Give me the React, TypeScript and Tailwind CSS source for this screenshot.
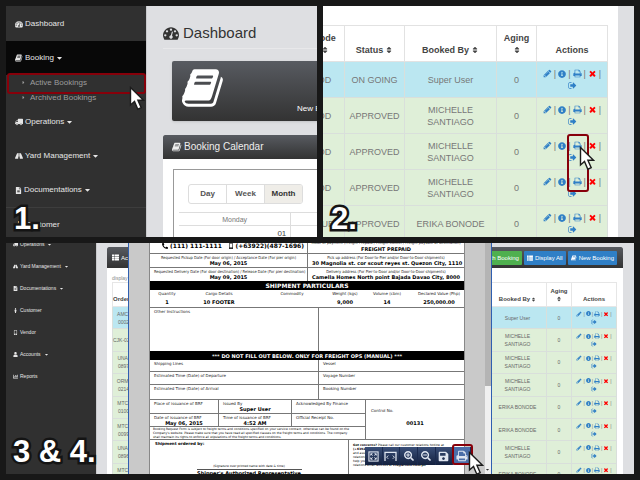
import React from "react";
import {
  FaCaretDown,
  FaCaretRight,
  FaChartBar,
  FaFileAlt,
  FaInfoCircle,
  FaMale,
  FaMobileAlt,
  FaPhoneAlt,
  FaRoad,
  FaSave,
  FaSearchMinus,
  FaSearchPlus,
  FaSort,
  FaThList,
  FaTruck,
  FaUser,
} from "react-icons/fa";

const SANS = "font-['Liberation_Sans',Arial,sans-serif]";
const FORM = "font-['DejaVu_Sans',Verdana,sans-serif]";
const FORM_NARROW = "font-['DejaVu_Sans_Condensed','DejaVu_Sans',sans-serif]";

type GlyphProps = { className?: string };

function Glyph({ d, className = "" }: GlyphProps & { d: string }) {
  return (
    <svg viewBox="0 0 1792 1792" fill="currentColor" aria-hidden="true" className={`shrink-0 ${className}`}>
      <path d={d} />
    </svg>
  );
}

const Book = (p: GlyphProps) => (
  <Glyph
    {...p}
    d="M1639 478q40 57 18 129l-275 906q-19 64-76.5 107.5t-122.5 43.5h-923q-77 0-148.5-53.5t-99.5-131.5q-24-67-2-127 0-4 3-27t4-37q1-8-3-21.5t-3-19.5q2-11 8-21t16.5-23.5 16.5-23.5q23-38 45-91.5t30-91.5q3-10 .5-30t-.5-28q3-11 17-28t17-23q21-36 42-92t25-90q1-9-2.5-32t.5-28q4-13 22-30.5t22-22.5q19-26 42.5-84.5t27.5-96.5q1-8-3-25.5t-2-26.5q2-8 9-18t18-23 17-21q8-12 16.5-30.5t15-35 16-36 19.5-32 26.5-23.5 36-11.5 47.5 5.500l-1 3q38-9 51-9h761q74 0 114 56t18 130l-274 906q-36 119-71.5 153.5t-128.5 34.5h-869q-27 0-38 15-11 16-1 43 24 70 144 70h923q29 0 56-15.5t35-41.5l300-987q7-22 5-57 38 15 59 43zm-1064 2q-4 13 2 22.5t20 9.5h608q13 0 25.5-9.5t16.5-22.500l21-64q4-13-2-22.5t-20-9.5h-608q-13 0-25.5 9.5t-16.5 22.5zm-83 256q-4 13 2 22.5t20 9.5h608q13 0 25.5-9.5t16.5-22.500l21-64q4-13-2-22.5t-20-9.5h-608q-13 0-25.5 9.5t-16.5 22.5z"
  />
);

const Gauge = (p: GlyphProps) => (
  <Glyph
    {...p}
    d="M384 1152q0-53-37.5-90.5t-90.5-37.5-90.5 37.5-37.5 90.5 37.5 90.5 90.5 37.5 90.5-37.5 37.5-90.5zm192-448q0-53-37.5-90.5t-90.5-37.5-90.5 37.5-37.5 90.5 37.5 90.5 90.5 37.5 90.5-37.5 37.5-90.5zm428 481l101-382q6-26-7.5-48.5t-38.5-29.5-48 6.5-30 39.5l-101 382q-60 5-107 43.5t-63 98.5q-20 77 20 146t117 89 146-20 89-117q16-60-6-117t-72-91zm660-33q0-53-37.5-90.5t-90.5-37.5-90.5 37.5-37.5 90.5 37.5 90.5 90.5 37.5 90.5-37.5 37.5-90.5zm-640-640q0-53-37.5-90.5t-90.5-37.5-90.5 37.5-37.5 90.5 37.5 90.5 90.5 37.5 90.5-37.5 37.5-90.5zm448 192q0-53-37.5-90.5t-90.5-37.5-90.5 37.5-37.5 90.5 37.5 90.5 90.5 37.5 90.5-37.5 37.5-90.5zm320 448q0 261-141 483-19 29-54 29h-1402q-35 0-54-29-141-221-141-483 0-182 71-348t191-286 286-191 348-71 348 71 286 191 191 286 71 348z"
  />
);

const SignOut = (p: GlyphProps) => (
  <Glyph
    {...p}
    d="M704 1440q0 4 1 20t.5 26.5-3 23.5-10 19.5-20.5 6.5h-320q-119 0-203.5-84.5t-84.5-203.5v-704q0-119 84.5-203.5t203.5-84.5h320q13 0 22.5 9.5t9.5 22.5q0 4 1 20t.5 26.5-3 23.5-10 19.5-20.5 6.5h-320q-66 0-113 47t-47 113v704q0 66 47 113t113 47h312l11.5 1 11.5 3 8 5.5 7 9 2 13.5zm928-544q0 26-19 45l-544 544q-19 19-45 19t-45-19-19-45v-288h-448q-26 0-45-19t-19-45v-384q0-26 19-45t45-19h448v-288q0-26 19-45t45-19 45 19l544 544q19 19 19 45z"
  />
);

const Print = (p: GlyphProps) => (
  <Glyph
    {...p}
    d="M448 1536h896v-256h-896v256zm0-640h896v-384h-160q-40 0-68-28t-28-68v-160h-640v640zm1152 64q0-26-19-45t-45-19-45 19-19 45 19 45 45 19 45-19 19-45zm128 0v416q0 13-9.5 22.5t-22.5 9.5h-224v160q0 40-28 68t-68 28h-960q-40 0-68-28t-28-68v-160h-224q-13 0-22.5-9.5t-9.5-22.5v-416q0-79 56.5-135.5t135.5-56.5h64v-544q0-40 28-68t68-28h672q40 0 88 20t76 48l152 152q28 28 48 76t20 88v256h64q79 0 135.5 56.5t56.5 135.5z"
  />
);

const Pencil = (p: GlyphProps) => (
  <Glyph
    {...p}
    d="M491 1536l91-91-235-235-91 91v107h128v128h107zm523-928q0-22-22-22-10 0-17 7l-542 542q-7 7-7 17 0 22 22 22 10 0 17-7l542-542q7-7 7-17zm-54-192l416 416-832 832h-416v-416zm683 96q0 53-37 90l-166 166-416-416 166-165q36-38 90-38 53 0 91 38l235 234q37 39 37 91z"
  />
);

const Cross = (p: GlyphProps) => (
  <Glyph
    {...p}
    d="M1490 1322q0 40-28 68l-136 136q-28 28-68 28t-68-28l-294-294-294 294q-28 28-68 28t-68-28l-136-136q-28-28-28-68t28-68l294-294-294-294q-28-28-28-68t28-68l136-136q28-28 68-28t68 28l294 294 294-294q28-28 68-28t68 28l136 136q28 28 28 68t-28 68l-294 294 294 294q28 28 28 68z"
  />
);

function Pointer({ className }: { className: string }) {
  return (
    <svg viewBox="0 0 16 25" aria-hidden="true" className={`absolute z-30 h-[25px] w-[16px] ${className}`}>
      <path d="M1.500 1.500V19l4-3.600 3.300 7.800 3.400-1.500-3.300-7.500h5.600z" fill="#fff" stroke="#1c1c1c" strokeWidth="1.4" />
    </svg>
  );
}

function StepLabel({ children, className }: { children: React.ReactNode; className: string }) {
  return (
    <div
      className={`absolute z-30 text-[31px] leading-[32px] font-bold text-white [-webkit-text-stroke:5px_#141414] [paint-order:stroke_fill] [stroke-linejoin:round] ${className}`}
    >
      {children}
    </div>
  );
}

/* ---------- Step 1: dashboard ---------- */

function NavItem({
  icon,
  label,
  caret,
  className = "",
}: {
  icon: React.ReactNode;
  label: string;
  caret?: boolean;
  className?: string;
}) {
  return (
    <button type="button" className={`flex w-full items-center text-left text-[#e6e6e6] ${className}`}>
      {icon}
      <span>{label}</span>
      {caret && <FaCaretDown className="ml-px w-[5px] shrink-0" />}
    </button>
  );
}

const ROW = "h-[34px] gap-[2px] pl-[9px]";

function DashboardPanel() {
  return (
    <section className="relative flex min-w-0 overflow-hidden bg-[#dedfe2]">
      <nav className="w-[140px] shrink-0 bg-[#303030] pt-px text-[8px] leading-[10px]">
        <NavItem className={ROW} icon={<Gauge className="size-[8px]" />} label="Dashboard" />
        <NavItem className={`${ROW} bg-[#080808]`} icon={<Book className="size-[8px]" />} label="Booking" caret />
        <div className="text-[#9d9d9d]">
          <a href="#active" className="flex h-[15px] items-center gap-[4px] pl-[15px]">
            <FaCaretRight className="size-[5px]" />
            Active Bookings
          </a>
          <a href="#archived" className="flex h-[15px] items-center gap-[4px] pl-[15px]">
            <FaCaretRight className="size-[5px]" />
            Archived Bookings
          </a>
        </div>
        <NavItem className={ROW} icon={<FaTruck className="size-[8px] -scale-x-100" />} label="Operations" caret />
        <NavItem className={ROW} icon={<FaRoad className="size-[8px]" />} label="Yard Management" caret />
        <NavItem className={ROW} icon={<FaFileAlt className="size-[7px]" />} label="Documentations" caret />
        <NavItem
          className={`${ROW} border-t border-[#3d3d3d]`}
          icon={<FaMale className="size-[8px]" />}
          label="Customer"
        />
      </nav>
      <main className="min-w-0 flex-1 border-l border-[#c9cacd] pl-[16px]">
        <h1 className="flex h-[43px] items-center gap-[4px] border-b border-[#e8e8ea] pt-[12px] text-[15px] leading-[18px] text-[#333]">
          <Gauge className="size-[16px]" />
          Dashboard
        </h1>
        <button
          type="button"
          className="mt-[12px] ml-[9px] flex h-[60px] w-[400px] items-start rounded-[2px] bg-linear-to-b from-[#585b61] to-[#333] pl-[10px] text-[8px] leading-[10px] text-white shadow-sm"
        >
          <Book className="mt-[5px] size-[44px]" />
          <span className="mt-[43px] ml-[71px]">New Bookings</span>
        </button>
        <section className="mt-[14px] w-[400px] bg-white">
          <h2 className="flex h-[24px] items-center gap-[2px] rounded-t-[2px] bg-linear-to-b from-[#585b61] to-[#333] pl-[9px] text-[10px] leading-[12px] text-[#eee]">
            <Book className="size-[10px]" />
            Booking Calendar
          </h2>
          <div className="mt-[10px] ml-[10px] h-[120px] border border-[#999] pt-[14px] pl-[5px]">
            <div className="ml-[9px] flex h-[20px] w-[115px] divide-x divide-[#ddd] overflow-hidden rounded-[3px] border border-[#ddd] text-[8px] leading-[10px] font-bold text-[#555]">
              <button type="button" className="flex-1">Day</button>
              <button type="button" className="flex-1">Week</button>
              <button type="button" className="flex-1 bg-[#efede8] text-[#333]">Month</button>
            </div>
            <table className="mt-[8px] w-[336px] table-fixed border-collapse text-[7px] leading-[9px] text-[#777]">
              <thead>
                <tr className="h-[13px]">
                  <th className="border border-l-0 border-[#ddd] p-0 font-normal">Monday</th>
                  <th className="border border-[#ddd] p-0 font-normal">Tuesday</th>
                  <th className="border border-[#ddd] p-0 font-normal">Wednesday</th>
                </tr>
              </thead>
              <tbody>
                <tr className="h-[40px] align-top text-right text-[8px] text-[#444]">
                  <td className="border border-l-0 border-[#ddd] p-0 pt-[3px] pr-[4px]">01</td>
                  <td className="border border-[#ddd] p-0 pt-[3px] pr-[4px]">02</td>
                  <td className="border border-[#ddd] p-0 pt-[3px] pr-[4px]">03</td>
                </tr>
              </tbody>
            </table>
          </div>
        </section>
      </main>
      <div className="absolute top-[67px] left-[1px] h-[21px] w-[139px] rounded-[3px] border-2 border-[#87000a]" />
      <Pointer className="top-[80px] left-[123px]" />
      <StepLabel className="bottom-[2px] left-[8px]">1.</StepLabel>
    </section>
  );
}

/* ---------- Step 2: bookings table ---------- */

function Actions({ large }: { large?: boolean }) {
  const size = large ? "size-[8px]" : "size-[5px]";
  const glyph = large ? "size-[9px]" : "size-[6px]";
  return (
    <div className={large ? "leading-[12px] text-[#777]" : "leading-[8px] text-[#777]"}>
      <div
        className={`flex items-center justify-center text-[#2f7fc6] ${large ? "h-[12px] gap-[2px]" : "h-[8px] gap-px"}`}
      >
        <a href="#edit" aria-label="Edit"><Pencil className={glyph} /></a>
        <span className="text-[#777]">|</span>
        <a href="#info" aria-label="Details"><FaInfoCircle className={size} /></a>
        <span className="text-[#777]">|</span>
        <a href="#print" aria-label="Print"><Print className={glyph} /></a>
        <span className="text-[#777]">|</span>
        <a href="#delete" aria-label="Delete" className="text-[#f00]"><Cross className={glyph} /></a>
        <span className="text-[#777]">|</span>
      </div>
      <a
        href="#release"
        aria-label="Release"
        className={`flex items-center justify-center text-[#2f7fc6] ${large ? "h-[12px]" : "h-[8px]"}`}
      >
        <SignOut className={glyph} />
      </a>
    </div>
  );
}

const BOOKINGS = [
  { mode: "OD", status: "ON GOING", by: ["Super User"], active: true },
  { mode: "OD", status: "APPROVED", by: ["MICHELLE", "SANTIAGO"] },
  { mode: "OD", status: "APPROVED", by: ["MICHELLE", "SANTIAGO"] },
  { mode: "OD", status: "APPROVED", by: ["MICHELLE", "SANTIAGO"] },
  { mode: "OUR", status: "APPROVED", by: ["ERIKA BONODE"] },
];

const TH = "border border-[#e2e2e2] p-0 pb-[5px] align-bottom font-bold";
const TD = "border border-[#d9dfdb] p-0 align-middle";

function BookingsPanel() {
  return (
    <section className="relative overflow-hidden bg-white pr-[16px]">
      <div className="absolute inset-y-0 right-0 w-[16px] bg-[#dedfe2]" />
      <div className="mt-[19px] mr-[10px] -ml-[19px]">
        <table className="w-full table-fixed border-collapse text-center text-[9px] leading-[12px] text-[#777]">
          <colgroup>
            <col className="w-[40px]" />
            <col className="w-[60px]" />
            <col />
            <col className="w-[40px]" />
            <col className="w-[71px]" />
          </colgroup>
          <thead className="text-[#444]">
            <tr className="h-[36px]">
              <th className={TH}>Code<FaSort className="mx-auto my-[2px] size-[8px]" /></th>
              <th className={TH}>
                <div className="flex items-center justify-center gap-[2px]">Status<FaSort className="size-[8px]" /></div>
              </th>
              <th className={TH}>
                <div className="flex items-center justify-center gap-[2px]">Booked By<FaSort className="size-[8px]" /></div>
              </th>
              <th className={TH}>Aging<FaSort className="mx-auto my-[2px] size-[8px]" /></th>
              <th className={TH}>Actions</th>
            </tr>
          </thead>
          <tbody>
            {BOOKINGS.map((b, i) => (
              <tr key={i} className={`h-[36px] ${b.active ? "bg-[#bbe7f1]" : "bg-[#dfefd8]"}`}>
                <td className={TD}>{b.mode}</td>
                <td className={TD}>{b.status}</td>
                <td className={TD}>{b.by.map((line) => <div key={line}>{line}</div>)}</td>
                <td className={TD}>0</td>
                <td className={TD}><Actions large /></td>
              </tr>
            ))}
          </tbody>
        </table>
      </div>
      <div className="absolute top-[128px] right-[45px] h-[58px] w-[22px] rounded-[3px] border-2 border-[#87000a]" />
      <Pointer className="top-[140px] right-[39px]" />
      <StepLabel className="bottom-[2px] left-[8px]">2.</StepLabel>
    </section>
  );
}

/* ---------- Steps 3 & 4: print preview ---------- */

const ORDERS = [
  { id: ["AMC-", "0002"], by: ["Super User"], active: true },
  { id: ["CJK-0245"], by: ["MICHELLE", "SANTIAGO"] },
  { id: ["UNA-", "0897"], by: ["MICHELLE", "SANTIAGO"] },
  { id: ["ORM-", "0214"], by: ["MICHELLE", "SANTIAGO"] },
  { id: ["MTC-", "0100"], by: ["ERIKA BONODE"] },
  { id: ["MTC-", "0099"], by: ["ERIKA BONODE"] },
  { id: ["UNA-", "0896"], by: ["MICHELLE", "SANTIAGO"] },
  { id: ["MTC-", "0098"], by: ["ERIKA BONODE"] },
];

const SMALL_ROW = "h-[22px] gap-[2px] pl-[7px]";

function Field({
  label,
  value,
  className = "",
  narrow,
}: {
  label: string;
  value?: string;
  className?: string;
  narrow?: boolean;
}) {
  return (
    <div className={`px-[4px] pt-px leading-[5px] whitespace-nowrap ${className}`}>
      <div className={narrow ? `text-center ${FORM_NARROW}` : ""}>{label}</div>
      {value && <div className="text-center text-[5px] leading-[7px] font-bold text-black">{value}</div>}
    </div>
  );
}

function Band({ children, className }: { children: React.ReactNode; className: string }) {
  return (
    <div className={`flex h-[9px] items-center justify-center bg-black font-bold whitespace-nowrap text-white ${className}`}>
      {children}
    </div>
  );
}

function BookingForm() {
  const cargo = [
    ["Quantity", "1", "w-[34px]"],
    ["Cargo Details", "10 FOOTER", "w-[70px]"],
    ["Commodity", "", "w-[76px]"],
    ["Weight (kgs)", "9,000", "w-[30px]"],
    ["Volume (cbm)", "14", "w-[54px]"],
    ["Declared Value (Php)", "250,000.00", "flex-1"],
  ];
  return (
    <article className={`min-w-0 flex-1 overflow-hidden border-x border-[#888] bg-white text-[4px] text-[#222] ${FORM}`}>
      <div className="flex h-[11px] border-b border-[#777]">
        <div className="flex w-[158px] shrink-0 justify-between border-r border-[#777] pr-[3px] pl-[12px] text-[6px] leading-[6px] font-bold whitespace-nowrap text-black">
          <span className="flex gap-[2px]"><FaPhoneAlt className="size-[6px]" />(111) 111-1111</span>
          <span className="flex gap-px"><FaMobileAlt className="size-[6px]" />(+63922)(487-1696)</span>
        </div>
        <div className="min-w-0 flex-1 text-center whitespace-nowrap">
          <div className={`-mt-[3px] leading-[6px] ${FORM_NARROW}`}>
            Mode of payment (Freight Prepaid / Freight Collect / Freight payable at destination)
          </div>
          <div className="text-[5px] leading-[6px] font-bold text-black">FREIGHT PREPAID</div>
        </div>
      </div>
      <div className="flex h-[14px] border-b border-[#777]">
        <Field
          narrow
          className="w-[158px] shrink-0 border-r border-[#777]"
          label="Requested Pickup Date (For door origin) / Acceptance Date (For pier origin)"
          value="May 06, 2015"
        />
        <Field
          narrow
          className="min-w-0 flex-1"
          label="Pick up address (For Door-to-Pier and/or Door-to-Door shipments)"
          value="30 Magnolia st. cor scout reyes st. Quezon City, 1110"
        />
      </div>
      <div className="flex h-[13px]">
        <Field
          narrow
          className="w-[158px] shrink-0 border-r border-[#777]"
          label="Requested Delivery Date (For door destination) / Release Date (For pier destination)"
          value="May 09, 2015"
        />
        <Field
          narrow
          className="min-w-0 flex-1"
          label="Delivery address (For Pier-to-Door and/or Door-to-Door shipments)"
          value="Camella Homes North point Bajada Davao City, 8000"
        />
      </div>
      <Band className="text-[6px] leading-[8px]">SHIPMENT PARTICULARS</Band>
      <div className="flex h-[18px] border-b border-[#777] text-center whitespace-nowrap">
        {cargo.map(([label, value, width]) => (
          <div key={label} className={`${width} pt-px leading-[5px]`}>
            <div>{label}</div>
            <div className="pt-[4px] text-[5px] leading-[5px] font-bold text-black">{value}</div>
          </div>
        ))}
      </div>
      <div className="flex h-[43px]">
        <Field className="w-[169px] border-r border-[#777]" label="Other Instructions" />
      </div>
      <Band className="text-[5px] leading-[8px]">*** DO NOT FILL OUT BELOW. ONLY FOR FREIGHT OPS (MANUAL) ***</Band>
      {[
        ["Shipping Lines", "Vessel", "h-[12px]"],
        ["Estimated Time (Date) of Departure", "Voyage Number", "h-[13px]"],
        ["Estimated Time (Date) of Arrival", "Booking Number", "h-[15px]"],
      ].map(([left, right, height]) => (
        <div key={left} className={`flex border-b border-[#777] ${height}`}>
          <Field className="w-[169px] border-r border-[#777]" label={left} />
          <Field label={right} />
        </div>
      ))}
      <div className="flex h-[40px] border-b border-[#777]">
        <div className="w-[216px] shrink-0 border-r border-[#777]">
          <div className="flex h-[14px] border-b border-[#777]">
            <Field className="w-[69px] border-r border-[#777]" label="Place of issuance of BRF" />
            <Field className="w-[73px] border-r border-[#777]" label="Issued By" value="Super User" />
            <Field label="Acknowledged By Finance" />
          </div>
          <div className="flex h-[13px] border-b border-[#777]">
            <Field className="w-[69px] border-r border-[#777]" label="Date of issuance of BRF" value="May 06, 2015" />
            <Field className="w-[73px] border-r border-[#777]" label="Time of issuance of BRF" value="4:52 AM" />
            <Field label="Official Receipt No." />
          </div>
          <div className="px-[3px] text-[3px] leading-[4px] whitespace-nowrap text-black">
            <div>Booking Request Form is subject to freight terms and conditions specified on your service contract, otherwise can be found on the</div>
            <div>Company's website. Please make sure that you have read all specified clauses on the freight terms and conditions. The company</div>
            <div>shall maintain its rights to enforce all stipulations of the freight terms and conditions.</div>
          </div>
        </div>
        <div className="flex-1 px-[5px] pt-[8px] leading-[6px]">
          Control No.
          <div className="pt-[6px] text-center text-[5px] leading-[7px] font-bold text-black">00131</div>
        </div>
      </div>
      <div className="flex h-[40px]">
        <div className="w-[199px] shrink-0 border-r border-[#777] px-[5px] pt-px whitespace-nowrap text-black">
          <div className="leading-[5px] font-bold">Shipment ordered by:</div>
          <div className="mx-auto mt-[18px] w-[105px] text-center">
            <div className="border-b border-[#555] text-[3px] leading-[5px]">(Signature over printed name with date &amp; time)</div>
            <div className="-mx-[4px] text-[5px] leading-[7px] font-bold">Shipper's Authorized Representative</div>
          </div>
        </div>
        <div className="pt-[3px] pl-[4px] text-[3px] leading-[4px] whitespace-nowrap text-black">
          <div><b>Got concerns?</b> Please call our customer relations hotline at</div>
          <div className="font-bold">(+63922)</div>
          <div>and assist</div>
          <div>relations</div>
          <div>help you</div>
          <div>relations email address at <b>crd@arnest.com.ph</b></div>
        </div>
      </div>
    </article>
  );
}

const TOOL = "flex h-full items-center justify-center border-r border-[#1b2b50]";

function FitPage() {
  return (
    <svg viewBox="0 0 12 12" aria-hidden="true" className="size-[11px]" fill="none" stroke="currentColor">
      <rect x="1" y="1" width="10" height="10" strokeWidth="1.2" />
      <path d="M3 5V3h2M7 3h2v2M9 7v2H7M5 9H3V7M3.200 3.200 5 5M8.800 3.200 7 5M8.800 8.800 7 7M3.200 8.800 5 7" />
    </svg>
  );
}

function FitWidth() {
  return (
    <svg viewBox="0 0 14 12" aria-hidden="true" className="h-[11px] w-[13px]" fill="none" stroke="currentColor">
      <path d="M1 11V1.500h12V11" strokeWidth="1.4" />
      <path d="M4.500 5 2.800 6.800l1.700 1.700M9.500 5l1.700 1.800-1.700 1.700" />
    </svg>
  );
}

function PreviewDialog() {
  return (
    <div
      role="dialog"
      aria-label="Booking form"
      className="absolute inset-y-0 right-[142px] left-[122px] z-10 flex border-x border-[#2f5fb0] bg-[#c9c9c9] pl-[20px]"
    >
      <BookingForm />
      <div className="w-[20px] shrink-0" />
      <div className="flex w-[6px] shrink-0 flex-col bg-[#f0f0f0]">
        <div className="h-[143px] w-full bg-[#b4b4b4]" />
        <FaCaretDown className="mt-auto mb-[2px] size-[5px] text-[#333]" />
      </div>
      <div className="absolute right-[20px] bottom-[9px] grid h-[18px] w-[106px] grid-cols-6 bg-linear-to-b from-[#3a4f78] to-[#14213f] text-[#dfe5f0]">
        <button type="button" aria-label="Fit page" className={TOOL}><FitPage /></button>
        <button type="button" aria-label="Fit width" className={TOOL}><FitWidth /></button>
        <button type="button" aria-label="Zoom in" className={TOOL}><FaSearchPlus className="size-[10px]" /></button>
        <button type="button" aria-label="Zoom out" className={TOOL}><FaSearchMinus className="size-[10px]" /></button>
        <button type="button" aria-label="Save" className={TOOL}><FaSave className="size-[11px]" /></button>
        <button type="button" aria-label="Print" className={`${TOOL} bg-[#4b6ea8]`}><Print className="size-[12px]" /></button>
      </div>
      <div className="absolute right-[18px] bottom-[9px] z-20 h-[21px] w-[21px] rounded-[3px] border-2 border-[#87000a]" />
      <Pointer className="right-[7px] bottom-[-2px]" />
    </div>
  );
}

const CTA = "flex h-[14px] items-center gap-[2px] rounded-[1px] px-[3px] text-white";
const TH3 = "border border-[#e6e6e6] p-0 pb-[3px] align-bottom font-bold whitespace-nowrap";
const TD3 = "border border-[#d9dfdb] p-0 align-middle whitespace-nowrap";

function PrintPanel() {
  return (
    <section className="relative col-span-2 flex overflow-hidden bg-[#dedfe2]">
      <nav className="w-[90px] shrink-0 bg-[#303030] text-[5px] leading-[7px]">
        <div className="-mt-[10px]">
          <NavItem className={SMALL_ROW} icon={<FaTruck className="size-[5px] -scale-x-100" />} label="Operations" caret />
          <NavItem className={SMALL_ROW} icon={<FaRoad className="size-[5px]" />} label="Yard Management" caret />
          <NavItem className={SMALL_ROW} icon={<FaFileAlt className="size-[5px]" />} label="Documentations" caret />
          <NavItem className={SMALL_ROW} icon={<FaMale className="size-[5px]" />} label="Customer" />
          <NavItem className={SMALL_ROW} icon={<FaMobileAlt className="size-[5px]" />} label="Vendor" />
          <NavItem className={SMALL_ROW} icon={<FaUser className="size-[5px]" />} label="Accounts" caret />
          <NavItem className={SMALL_ROW} icon={<FaChartBar className="size-[5px]" />} label="Reports" />
        </div>
      </nav>
      <main className="min-w-0 flex-1 border-l border-[#c9cacd] pt-[4px] pr-[11px] pl-[10px]">
        <div className="h-full bg-white">
          <header className="flex h-[21px] items-center gap-[2px] rounded-t-[2px] bg-linear-to-b from-[#585b61] to-[#333] pr-[6px] pl-[5px] text-[6px] leading-[8px] text-white">
            <FaThList className="size-[7px]" />
            <h2 className="mr-auto">Active Bookings</h2>
            <button type="button" className={`${CTA} bg-[#4fb04f]`}>Search Booking</button>
            <button type="button" className={`${CTA} bg-[#2f7fc6]`}><FaThList className="size-[6px]" />Display All</button>
            <button type="button" className={`${CTA} bg-[#2f7fc6]`}><Book className="size-[6px]" />New Booking</button>
          </header>
          <div className="pr-[6px] pl-[5px]">
            <p className="h-[14px] pt-[7px] text-[5px] leading-[7px] text-[#888]">display</p>
            <table className="h-[204px] w-full table-fixed border-collapse text-center text-[5px] leading-[8px] text-[#666]">
              <colgroup>
                <col className="w-[22px]" />
                <col />
                <col className="w-[58px]" />
                <col className="w-[25px]" />
                <col className="w-[45px]" />
              </colgroup>
              <thead className="text-[6px] text-[#444]">
                <tr className="h-[24px]">
                  <th className={TH3}>Order #</th>
                  <th className={TH3} />
                  <th className={TH3}>
                    <div className="flex items-center justify-center gap-px">Booked By<FaSort className="size-[5px]" /></div>
                  </th>
                  <th className={TH3}>Aging<FaSort className="mx-auto my-px size-[6px]" /></th>
                  <th className={TH3}>Actions</th>
                </tr>
              </thead>
              <tbody>
                {ORDERS.map((o, i) => (
                  <tr key={i} className={o.active ? "bg-[#bbe7f1]" : "bg-[#dfefd8]"}>
                    <td className={TD3}>{o.id.map((line) => <div key={line}>{line}</div>)}</td>
                    <td className={TD3} />
                    <td className={TD3}>{o.by.map((line) => <div key={line}>{line}</div>)}</td>
                    <td className={TD3}>0</td>
                    <td className={TD3}><Actions /></td>
                  </tr>
                ))}
              </tbody>
            </table>
          </div>
        </div>
      </main>
      <PreviewDialog />
      <StepLabel className="bottom-[6px] left-[7px]">3 &amp; 4.</StepLabel>
    </section>
  );
}

export default function App() {
  return (
    <div className={`grid h-screen grid-cols-2 grid-rows-2 gap-[6px] bg-[#181818] p-[6px] ${SANS}`}>
      <DashboardPanel />
      <BookingsPanel />
      <PrintPanel />
    </div>
  );
}
